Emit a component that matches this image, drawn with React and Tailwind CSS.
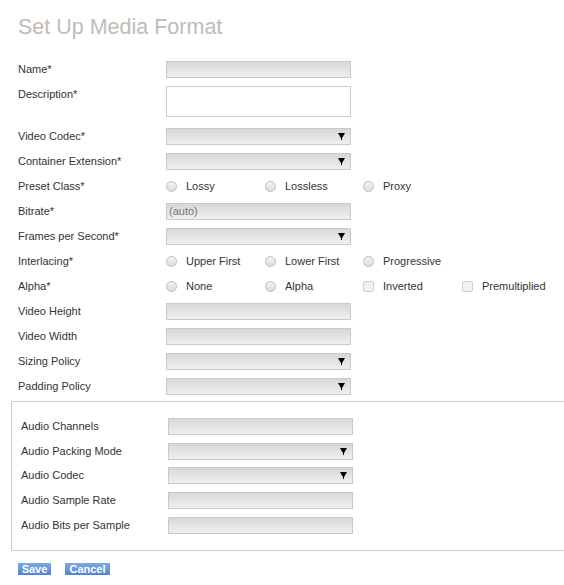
const field =
  'h-[17px] w-[185px] border border-[#c9c9c9] bg-linear-to-b from-[#d8d8d8] to-[#efefef]';

function TextBox({ placeholder }) {
  return (
    <div className={field + ' flex items-center pl-[2px] text-[11px] text-[#777]'}>
      {placeholder}
    </div>
  );
}

function SelectBox() {
  return (
    <div className={field + ' flex items-center justify-end pr-[5px]'}>
      <svg width="7" height="7" viewBox="0 0 7 7">
        <polygon points="0,0 7,0 3.5,6" fill="#000" />
        <rect x="3" y="5" width="1" height="2" fill="#000" />
      </svg>
    </div>
  );
}

function Radio({ label }) {
  return (
    <div className="flex items-center">
      <span className="w-[11px] h-[11px] rounded-full border border-[#bdbdbd] bg-linear-to-b from-[#f4f4f4] to-[#dcdcdc]" />
      <span className="ml-[9px]">{label}</span>
    </div>
  );
}

function Check({ label }) {
  return (
    <div className="flex items-center">
      <span className="w-[11px] h-[11px] rounded-[2px] border border-[#cfcfcf] bg-[#f1f1f1]" />
      <span className="ml-[9px]">{label}</span>
    </div>
  );
}

function Row({ label, children, audio }) {
  return (
    <div className={'flex items-center ' + (audio ? 'h-[24.75px] pl-[9px]' : 'h-[25px] pl-[18px]')}>
      <div className={audio ? 'w-[147px]' : 'w-[148px]'}>{label}</div>
      {children}
    </div>
  );
}

function Options({ children }) {
  return <div className="grid grid-cols-[99px_98px_99px_99px]">{children}</div>;
}

export default function App() {
  return (
    <div className="w-[564px] h-[585px] overflow-hidden bg-white font-['Liberation_Sans',Arial,sans-serif] text-[11px] leading-[13px] text-[#333]">
      <h1 className="pl-[18px] pt-[14px] text-[21.5px] leading-[26px] text-[#c2bbb4]">
        Set Up Media Format
      </h1>

      <div className="mt-[17px]">
        <Row label="Name*">
          <TextBox />
        </Row>
        <div className="flex items-start h-[42px] pl-[18px]">
          <div className="w-[148px] pt-[6px]">Description*</div>
          <div className="mt-[4px] h-[31px] w-[185px] border border-[#cccccc] bg-white" />
        </div>
        <Row label="Video Codec*">
          <SelectBox />
        </Row>
        <Row label="Container Extension*">
          <SelectBox />
        </Row>
        <Row label="Preset Class*">
          <Options>
            <Radio label="Lossy" />
            <Radio label="Lossless" />
            <Radio label="Proxy" />
          </Options>
        </Row>
        <Row label="Bitrate*">
          <TextBox placeholder="(auto)" />
        </Row>
        <Row label="Frames per Second*">
          <SelectBox />
        </Row>
        <Row label="Interlacing*">
          <Options>
            <Radio label="Upper First" />
            <Radio label="Lower First" />
            <Radio label="Progressive" />
          </Options>
        </Row>
        <Row label="Alpha*">
          <Options>
            <Radio label="None" />
            <Radio label="Alpha" />
            <Check label="Inverted" />
            <Check label="Premultiplied" />
          </Options>
        </Row>
        <Row label="Video Height">
          <TextBox />
        </Row>
        <Row label="Video Width">
          <TextBox />
        </Row>
        <Row label="Sizing Policy">
          <SelectBox />
        </Row>
        <Row label="Padding Policy">
          <SelectBox />
        </Row>
      </div>

      {/* Audio section */}
      <div className="ml-[11px] mt-[2px] border-t border-l border-b border-[#cccccc] pt-[12px] pb-[12px]">
        <Row audio label="Audio Channels">
          <TextBox />
        </Row>
        <Row audio label="Audio Packing Mode">
          <SelectBox />
        </Row>
        <Row audio label="Audio Codec">
          <SelectBox />
        </Row>
        <Row audio label="Audio Sample Rate">
          <TextBox />
        </Row>
        <Row audio label="Audio Bits per Sample">
          <TextBox />
        </Row>
      </div>

      <div className="flex gap-[14px] ml-[18px] mt-[12px]">
        <button className="w-[33px] h-[12px] bg-linear-to-b from-[#7fa9e4] to-[#4f84d3] text-white text-[11px] font-bold leading-[12px]">
          Save
        </button>
        <button className="w-[45px] h-[12px] bg-linear-to-b from-[#7fa9e4] to-[#4f84d3] text-white text-[11px] font-bold leading-[12px]">
          Cancel
        </button>
      </div>
    </div>
  );
}
